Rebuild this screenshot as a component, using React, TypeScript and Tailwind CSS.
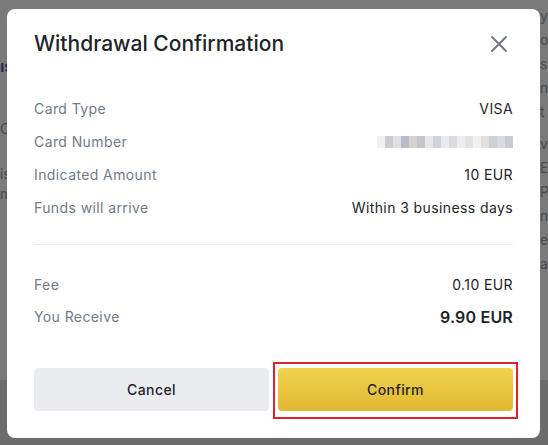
import React from "react";

const rows = [
  { label: "Card Type", value: "VISA" },
  { label: "Card Number", value: "" },
  { label: "Indicated Amount", value: "10 EUR" },
  { label: "Funds will arrive", value: "Within 3 business days" },
];

// blurred card number, drawn as a pixel mosaic
const mosaic = [
  "#f3f1ee", "#c9cdd3", "#dfe1e5", "#b8bcc4", "#d5d2d0", "#c3c6cc", "#e6e7ea", "#cfd2d8",
  "#e9eaec", "#d8dadf", "#eceef0", "#e1e3e6", "#f0f0f1", "#e3e0dc", "#ced1d6", "#d9dbe0", "#c8ccd2",
];

function CloseIcon() {
  return (
    <svg width="18" height="18" viewBox="0 0 18 18" fill="none">
      <path d="M2 2L16 16M16 2L2 16" stroke="#707a8a" strokeWidth="2" strokeLinecap="round" />
    </svg>
  );
}

export default function App() {
  return (
    <div
      className="relative w-[548px] h-[445px] overflow-hidden bg-[#7a7a7a]"
      style={{ fontFamily: "Inter, 'Noto Sans', sans-serif" }}
    >
      {/* page behind the overlay */}
      <div className="absolute left-0 top-[54px] text-[16px] font-bold text-[#2a2f5a]">ıs</div>
      <div className="absolute left-0 top-[118px] text-[14px] text-[#4a4a4a]">C</div>
      <div className="absolute left-0 top-[164px] text-[14px] text-[#4a4a4a] leading-[20px]">
        is
        <br />
        m
      </div>
      <div className="absolute left-[540px] top-[4px] w-[8px] overflow-hidden text-[14px] leading-[24px] text-[#4a4a4a]">
        <div>y</div>
        <div>o</div>
        <div>s</div>
        <div>n</div>
        <div>t</div>
        <div className="h-[8px]" />
        <div>v</div>
        <div>E</div>
        <div>P</div>
        <div>n</div>
        <div>e</div>
        <div>a</div>
      </div>
      <div className="absolute left-0 right-0 bottom-0 h-[65px] bg-[#6c6c6c]" />

      {/* MODAL */}
      <div className="absolute left-[7px] top-[9px] w-[533px] h-[429px] rounded-[8px] bg-white px-[27px] pt-[21px] tracking-[0.4px]">
        {/* HEADER */}
        <div className="flex items-center justify-between">
          <h2 className="text-[21px] leading-[28px] font-medium tracking-[0px] text-[#1e2329]">Withdrawal Confirmation</h2>
          <button className="mr-[5px]">
            <CloseIcon />
          </button>
        </div>

        {/* DETAILS */}
        <div className="mt-[41px] flex flex-col gap-[13px]">
          {rows.map((r) => (
            <div key={r.label} className="flex items-center justify-between h-[20px] text-[14px] leading-[20px]">
              <span className="text-[#707a8a]">{r.label}</span>
              {r.value ? (
                <span className="text-[#1e2329]">{r.value}</span>
              ) : (
                <div className="flex h-[12px] blur-[0.6px]">
                  {mosaic.map((c, i) => (
                    <span key={i} className="w-[8px] h-[12px]" style={{ background: c }} />
                  ))}
                </div>
              )}
            </div>
          ))}
        </div>

        <div className="mt-[26px] h-px bg-[#eaecef]" />

        <div className="mt-[30px] flex flex-col gap-[12px]">
          <div className="flex items-center justify-between h-[20px] text-[14px] leading-[20px]">
            <span className="text-[#707a8a]">Fee</span>
            <span className="text-[#1e2329]">0.10 EUR</span>
          </div>
          <div className="flex items-center justify-between h-[20px] leading-[20px]">
            <span className="text-[14px] text-[#707a8a]">You Receive</span>
            <span className="text-[16px] font-semibold tracking-[0.2px] text-[#1e2329]">9.90 EUR</span>
          </div>
        </div>

        {/* BUTTONS */}
        <div className="mt-[41px] flex gap-[9px]">
          <button className="w-[235px] h-[43px] rounded-[4px] bg-[#eaecef] text-[14px] font-medium text-[#1e2329]">
            Cancel
          </button>
          <div className="relative flex-1">
            <button className="w-full h-[43px] rounded-[4px] bg-gradient-to-b from-[#f0d34e] to-[#e2b830] text-[14px] font-medium text-[#1e2329]">
              Confirm
            </button>
            <div className="absolute -left-[5px] -right-[5px] -top-[6px] -bottom-[8px] border-2 border-[#e0202c]" />
          </div>
        </div>
      </div>
    </div>
  );
}
